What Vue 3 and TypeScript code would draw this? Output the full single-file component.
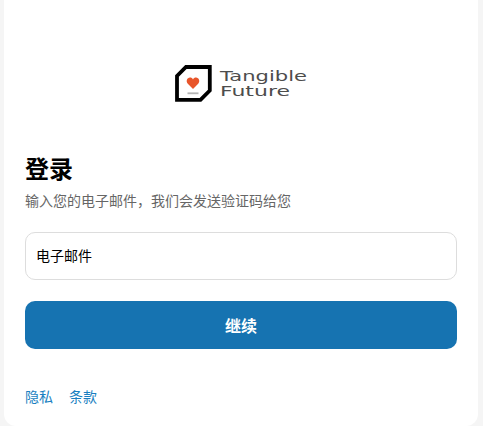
<script setup lang="ts">
const title = '登录'
const subtitle = '输入您的电子邮件\uFF0C我们会发送验证码给您'
const links: string[] = ['隐私', '条款']
</script>

<template>
  <main class="page">
    <section class="card">
      <div class="logo">
        <svg width="133" height="37" viewBox="0 0 133 37" role="img" aria-label="Tangible Future">
          <path d="M11 2 H34.8 V25.5 L25.5 34.8 H2 V11 Z" fill="#fff" stroke="#000" stroke-width="3.8" />
          <path d="M18 24 L12.8 18.8 C10.6 16.4 12 12.6 15 12.6 C16.3 12.6 17.4 13.2 18 14.4 C18.6 13.2 19.7 12.6 21 12.6 C24 12.6 25.4 16.4 23.2 18.8 Z" fill="#e8552a" />
          <rect x="12.5" y="27.4" width="11" height="1.8" fill="#b4b4b4" />
          <text class="word" x="45" y="16" textLength="87" lengthAdjust="spacingAndGlyphs">Tangible</text>
          <text class="word" x="45" y="31" textLength="70" lengthAdjust="spacingAndGlyphs">Future</text>
        </svg>
      </div>
      <h1>{{ title }}</h1>
      <p class="subtitle">{{ subtitle }}</p>
      <input class="email" type="text" placeholder="电子邮件" />
      <button class="continue" type="button">继续</button>
      <nav class="links"><a v-for="link in links" :key="link" href="#">{{ link }}</a></nav>
    </section>
  </main>
</template>

<style>
html, body { margin: 0; background: #f5f5f5; }
</style>

<style scoped>
.page {
  width: 483px;
  height: 426px;
  overflow: hidden;
  box-sizing: border-box;
  padding: 0 5px 0 4px;
  font-family: "Liberation Sans", "Noto Sans CJK SC", sans-serif;
}
.card {
  box-sizing: border-box;
  height: 426px;
  background: #fff;
  border-radius: 0 0 12px 12px;
  padding: 65px 21px 0;
}
.logo {
  display: flex;
  justify-content: center;
  height: 37px;
}
.logo svg { display: block; }
.word {
  font-family: "DejaVu Sans", sans-serif;
  font-size: 14px;
  fill: #4d4d4d;
}
h1 {
  margin: 52px 0 0;
  font-size: 24px;
  line-height: 32px;
  font-weight: 700;
  color: #000;
}
.subtitle {
  margin: 6px 0 0;
  font-size: 14px;
  line-height: 18px;
  color: #666;
}
.email {
  display: block;
  box-sizing: border-box;
  width: 100%;
  height: 48px;
  margin-top: 22px;
  padding: 0 10px;
  border: 1px solid #ddd;
  border-radius: 10px;
  outline: none;
  font: 14px "Liberation Sans", "Noto Sans CJK SC", sans-serif;
}
.email::placeholder { color: #000; opacity: 1; }
.continue {
  display: block;
  width: 100%;
  height: 48px;
  margin-top: 21px;
  border: 0;
  border-radius: 10px;
  background: #1673b1;
  color: #fff;
  font: 700 16px "Liberation Sans", "Noto Sans CJK SC", sans-serif;
}
.links {
  display: flex;
  gap: 16px;
  margin-top: 39px;
}
.links a {
  font-size: 14px;
  line-height: 18px;
  color: #1a7fc1;
  text-decoration: none;
}
</style>
